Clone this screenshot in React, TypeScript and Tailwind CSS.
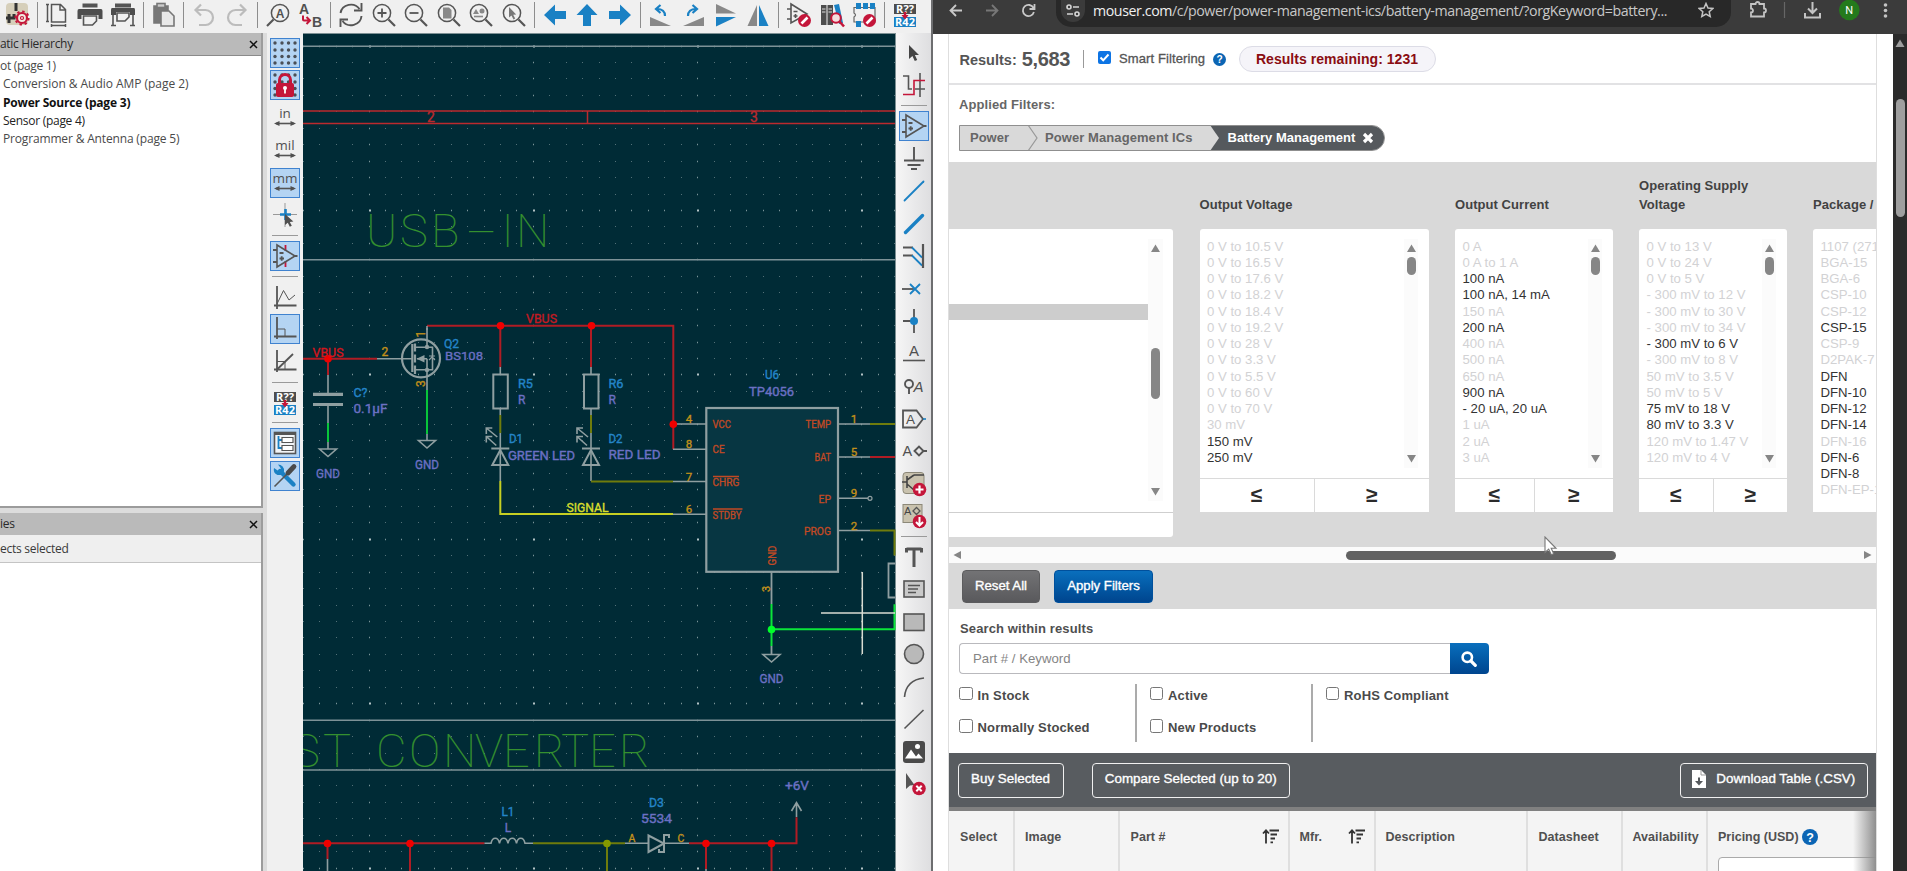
import React from "react";

type IconProps = { children: React.ReactNode };

const Ico = ({ children }: IconProps) => (
  <svg width="24" height="24" viewBox="0 0 24 24" fill="none" stroke="#555" strokeWidth="1.6" className="shrink-0 overflow-visible">
    {children}
  </svg>
);

const BLUE = "#1a81c4";
const RED = "#c4163a";

/* ---------- toolbar drawings ---------- */

const Annotate = () => (
  <Ico>
    <rect x="1" y="1" width="22" height="10" fill="#4d4d4d" stroke="none" />
    <rect x="1" y="14" width="22" height="10" fill={BLUE} stroke="none" />
    <text x="12" y="10" fontSize="11" fontWeight="700" fill="#fff" stroke="none" textAnchor="middle" textLength="18" fontFamily="Open Sans, sans-serif">R??</text>
    <text x="12" y="23.4" fontSize="11" fontWeight="700" fill="#fff" stroke="none" textAnchor="middle" textLength="20" fontFamily="Open Sans, sans-serif">R42</text>
    <path d="M12 9v4" stroke={RED} strokeWidth="2.4" />
    <path d="M8.5 12h7L12 16.500z" fill={RED} stroke="none" />
  </Ico>
);

const OpAmp = ({ red }: { red?: boolean }) => (
  <Ico>
    {red && <path d="M12.500 1v6M12.500 17v6" stroke={RED} strokeWidth="1.8" />}
    <path d="M4 1v22L22 12z" />
    <path d="M0 6h4M0 18h4M22 12h2.500M6.500 9h4M6.500 14.500h4.500M8.700 12.300v4.400" strokeWidth="1.800" />
  </Ico>
);

const Magnifier = ({ children }: { children?: React.ReactNode }) => (
  <Ico>
    <circle cx="10" cy="10" r="8.600" strokeWidth="1.500" />
    <path d="M16.500 16.500L23 23" strokeWidth="2.200" />
    {children}
  </Ico>
);

const Prohibit = () => (
  <g>
    <circle cx="17.500" cy="17.500" r="6.500" fill={RED} stroke="none" />
    <path d="M14.500 20.500l6-6" stroke="#fff" strokeWidth="2.600" />
  </g>
);

const Grid = () => (
  <g fill="#4a4f56" stroke="none">
    {[2, 9, 15.500, 22].map((y) => [2, 9, 15.500, 22].map((x) => <circle key={`${x}-${y}`} cx={x} cy={y} r="1.700" />))}
  </g>
);

const Unit = ({ label }: { label: string }) => (
  <Ico>
    <text x="12" y="11.500" fontSize="13.500" fill="#505050" stroke="none" textAnchor="middle" fontFamily="Open Sans, sans-serif">{label}</text>
    <path d="M3 17.500h18" strokeWidth="1.600" />
    <path d="M1 17.500l5.500-2.600v5.200zM23 17.500l-5.500-2.600v5.200z" fill="#505050" stroke="none" />
  </Ico>
);

const topIcons: (React.ReactNode | "|")[] = [
  <Ico key="g">
    <rect x="1" y="0" width="22" height="22" rx="4" fill="#d6cfba" stroke="none" />
    <path d="M11 0v8M1 15h8v-4M4 11v9" stroke="#333" strokeWidth="3" />
    <circle cx="17" cy="15" r="5" fill="#f2e9e0" stroke={RED} strokeWidth="2.200" />
    <circle cx="17" cy="15" r="6.600" stroke={RED} strokeWidth="2" strokeDasharray="2.400 2.780" />
    <circle cx="17" cy="15" r="1.500" stroke={RED} strokeWidth="1.200" />
  </Ico>,
  "|",
  <Ico key="pg"><path d="M5.500 1.500h9l5 5V19h-14zM14 1.500V7h5.500M1.500 1v18M0 1.500h3M0 18.500h3M5.500 22.500h14M5.500 21v3M19.500 21v3" strokeWidth="1.500" /></Ico>,
  <Ico key="pr">
    <rect x="4.500" y="0.500" width="15" height="4" fill="#555" stroke="none" />
    <path d="M1 6h22q1.500 0 1.500 2v8h-4v-4h-17v4h-4V8q0-2 1.500-2z" fill="#4d4d4d" stroke="none" />
    <path d="M5.500 13h13v5l-4 4h-9z" />
  </Ico>,
  <Ico key="pl">
    <rect x="4" y="0.500" width="16" height="4" fill="#555" stroke="none" />
    <path d="M1 5h22q1 0 1 2v5h-5V9H5v3H0V7q0-2 1-2z" fill="#4d4d4d" stroke="none" />
    <path d="M6 10h12v4l-4 4H6zM2 12v10M22 12v10M0 22.500h5M19 22.500h5" />
  </Ico>,
  "|",
  <Ico key="pa">
    <path d="M3 3h14v17H3z" fill="#777" stroke="#777" />
    <rect x="6" y="0.500" width="8" height="4" fill="#ccc" stroke="#777" />
    <path d="M10 8h8l5 5v10H10z" fill="#e8e8e8" stroke="#777" />
  </Ico>,
  "|",
  <Ico key="un"><path d="M7 22h6.500a7.500 7.500 0 0 0 0-15H4M9 1.500L3.500 7 9 12.500" stroke="#bcbcbc" strokeWidth="2.200" /></Ico>,
  <Ico key="re"><path d="M17 22h-6.500a7.500 7.500 0 0 1 0-15H20M15 1.500L20.500 7 15 12.500" stroke="#bcbcbc" strokeWidth="2.200" /></Ico>,
  "|",
  <Ico key="fi">
    <circle cx="14" cy="10" r="8.600" strokeWidth="1.500" />
    <path d="M7.500 16.500L1 23" strokeWidth="2.200" />
    <text x="14" y="14.500" fontSize="12" fontWeight="700" fill="#505050" stroke="none" textAnchor="middle" fontFamily="Liberation Sans, sans-serif">A</text>
  </Ico>,
  <Ico key="ab">
    <text x="1" y="11" fontSize="14" fontWeight="700" fill="#505050" stroke="none" fontFamily="Liberation Sans, sans-serif">A</text>
    <text x="14" y="23.500" fontSize="14" fontWeight="700" fill="#505050" stroke="none" fontFamily="Liberation Sans, sans-serif">B</text>
    <path d="M5 12.500v4q0 1 1 1h5M8.500 14l3.500 3.500L8.500 21" stroke={RED} strokeWidth="2" />
  </Ico>,
  "|",
  <Ico key="rf"><path d="M1.500 10A10.500 10 0 0 1 20.500 6M22.500 0v7.500H15M22.500 13A10.500 10 0 0 1 3.500 18M1.500 24v-7.500H9" strokeWidth="1.900" /></Ico>,
  <Magnifier key="z+"><path d="M5.500 10h9M10 5.500v9" strokeWidth="1.800" /></Magnifier>,
  <Magnifier key="z-"><path d="M5.500 10h9" strokeWidth="1.800" /></Magnifier>,
  <Magnifier key="zf"><path d="M6 4.500h6l2.500 2.500v8.500H6z" fill="#888" stroke="none" /></Magnifier>,
  <Magnifier key="zo"><path d="M4 11l3-5 3 5z" fill="#888" stroke="none" /><circle cx="13" cy="8" r="2.500" fill="#888" stroke="none" /><path d="M5 13.500h9" stroke="#888" /></Magnifier>,
  <Magnifier key="zs"><path d="M7 4v10.500l2.500-2 2 4 1.700-1-2-3.800 3-.3z" fill="#777" stroke="none" /></Magnifier>,
  "|",
  <Ico key="l"><path d="M1 12L12 1.500V8h11v8H12v6.500z" fill={BLUE} stroke="none" /></Ico>,
  <Ico key="u"><path d="M12 1L1.500 12H8v11h8V12h6.500z" fill={BLUE} stroke="none" /></Ico>,
  <Ico key="r"><path d="M23 12L12 1.500V8H1v8h11v6.500z" fill={BLUE} stroke="none" /></Ico>,
  "|",
  <Ico key="rl"><path d="M1 14v9h21z" fill="#888" stroke="none" /><path d="M16 13q0-7-8-7M11.500 2L7 6l4.500 4" stroke={BLUE} strokeWidth="2.200" /></Ico>,
  <Ico key="rr"><path d="M23 14v9H2z" fill="#888" stroke="none" /><path d="M7 13q0-7 8-7M11.500 2L16 6l-4.500 4" stroke={BLUE} strokeWidth="2.200" /></Ico>,
  <Ico key="fv"><path d="M2 1v9.500h20z" fill="#888" stroke="none" /><path d="M2 23.500V14h20z" fill={BLUE} stroke="none" /></Ico>,
  <Ico key="fh"><path d="M1.500 23H11V2z" fill="#888" stroke="none" /><path d="M22.500 23H13V2z" fill={BLUE} stroke="none" /></Ico>,
  "|",
  <Ico key="ed"><path d="M4 1v19L20 11zM0 6h4M0 16h4M6.500 8.500h4M6.500 13h4M8.500 11v4" /><Prohibit /></Ico>,
  <Ico key="lb">
    <path d="M1 2h5.500v20H1zM7.500 2H13v20H7.500z" fill="#4d4d4d" stroke="none" />
    <path d="M2 6h3.500M8.500 6H12M2 9h3.500M8.500 9H12" stroke="#ddd" strokeWidth="1" />
    <path d="M14 2l5-1 4 19-4 1z" fill={BLUE} stroke="none" />
    <circle cx="16" cy="15" r="4.800" fill="#f4dede" stroke={RED} strokeWidth="2" />
    <path d="M19.500 18.500l4.500 5" stroke={RED} strokeWidth="2.600" />
  </Ico>,
  <Ico key="fp">
    <path d="M2 4.500h21V19H2v-5q3-2 0-4z" stroke="#666" strokeWidth="1.200" />
    <path d="M4 0h5v6H4zM11 0h5v6h-5zM18 0h5v6h-5zM4 18h5v6H4z" fill={BLUE} stroke="none" />
    <Prohibit />
  </Ico>,
  "|",
  <Annotate key="an" />,
];

type SideItem = "|" | { icon: React.ReactNode; on?: boolean };

const leftIcons: SideItem[] = [
  { on: true, icon: <Ico><Grid /></Ico> },
  {
    on: true,
    icon: (
      <Ico>
        <Grid />
        <path d="M6.500 11V7a5.500 5.500 0 0 1 11 0v4" stroke={RED} strokeWidth="3" />
        <rect x="3" y="10" width="18" height="14" rx="2" fill={RED} stroke="none" />
        <circle cx="12" cy="15" r="2" fill="#fff" stroke="none" /><path d="M12 16v4.500" stroke="#fff" strokeWidth="1.800" />
      </Ico>
    ),
  },
  { icon: <Unit label="in" /> },
  { icon: <Unit label="mil" /> },
  { on: true, icon: <Unit label="mm" /> },
  {
    icon: (
      <Ico>
        <path d="M12 0v24M0 11.500h24" stroke="#999" strokeWidth="1" />
        <path d="M12.500 6v11M7 11.500h11" stroke={BLUE} strokeWidth="2.600" />
        <path d="M12 11v11l2.800-2.300 2 4 2-1-2-3.800 3.600-.4z" fill="#505050" stroke="none" />
      </Ico>
    ),
  },
  "|",
  { on: true, icon: <OpAmp red /> },
  "|",
  { icon: <Ico><path d="M4 1v23M1 20.500h22.500" strokeWidth="1.800" /><path d="M4 19l6.500-13.500L16 15l6-5" strokeWidth="1" /></Ico> },
  { on: true, icon: <Ico><path d="M4 0v22M1 19.500h22.500" strokeWidth="1.800" /><path d="M4 12h8v7.500" strokeWidth="1" /></Ico> },
  { icon: <Ico><path d="M4 0v22M1 19.500h22.500" strokeWidth="1.800" /><path d="M4 19.500L20 4" strokeWidth="1.800" /><path d="M4 11.500h8v8" strokeWidth="1" /></Ico> },
  "|",
  { icon: <Annotate /> },
  "|",
  {
    on: true,
    icon: (
      <Ico>
        <rect x="1.500" y="1.500" width="21" height="21" fill="#f2f4f6" /><path d="M1 2.500h22" strokeWidth="3" />
        <path d="M5.500 5v13M5.500 9h4M5.500 17h4" stroke={BLUE} strokeWidth="1.800" />
        <path d="M9 6.500h11v5H9zM9 14.500h11v5H9z" strokeWidth="1.200" fill="#fff" />
      </Ico>
    ),
  },
  {
    on: true,
    icon: (
      <Ico>
        <path d="M7 7l13.500 13.500" stroke={BLUE} strokeWidth="4.400" strokeLinecap="round" />
        <path d="M1 4l4.500 3L8 4.500 5 0.500A6 6 0 0 1 11 7.500 6 6 0 0 1 4.500 11 6 6 0 0 1 1 4z" fill={BLUE} stroke="none" />
        <path d="M1.500 22.500L14 10" strokeWidth="1.600" />
        <path d="M15 9l6-6.500" strokeWidth="4.800" strokeLinecap="round" stroke="#4a4a4a" />
      </Ico>
    ),
  },
];

const rightIcons: SideItem[] = [
  { icon: <Ico><path d="M7 4v14l3.400-3 2.400 5 2.400-1.100-2.300-4.900H17z" fill="#444" stroke="none" /></Ico> },
  { icon: <Ico><path d="M1 3h5.500v13H10M13 16h10M18 0v24" /><path d="M1 21.500h11V7.500h11" stroke={RED} strokeWidth="1.600" /></Ico> },
  "|",
  { on: true, icon: <OpAmp /> },
  { icon: <Ico><path d="M12 0v13.500M2 13.500h20M5.500 18h13M9 22h6" strokeWidth="1.900" /></Ico> },
  { icon: <Ico><path d="M2.500 21.500l19-19" stroke={BLUE} strokeWidth="1.800" strokeLinecap="round" /></Ico> },
  { icon: <Ico><path d="M3.500 20.500l17-17" stroke={BLUE} strokeWidth="3.400" strokeLinecap="round" /></Ico> },
  { icon: <Ico><path d="M1 3.500h10M1 11.500h10" strokeWidth="1.800" /><path d="M10 3.500l10 10M10 11.500l10 10" stroke={BLUE} strokeWidth="1.800" /><path d="M21 0v24" strokeWidth="2.200" /></Ico> },
  { icon: <Ico><path d="M0 12h12" strokeWidth="1.800" /><path d="M8 7l10 10M18 7L8 17" stroke={BLUE} strokeWidth="1.800" /></Ico> },
  { icon: <Ico><path d="M1 12h11M12 0v24" strokeWidth="1.800" /><circle cx="12" cy="12" r="4" fill={BLUE} stroke="none" /></Ico> },
  { icon: <Ico><text x="12" y="14" fontSize="15" fill="#505050" stroke="none" textAnchor="middle" fontFamily="Liberation Sans, sans-serif">A</text><path d="M1 18.500h22" /></Ico> },
  { icon: <Ico><circle cx="7" cy="10" r="4" strokeWidth="1.900" /><path d="M7 14v6" strokeWidth="1.900" /><text x="11.500" y="17.500" fontSize="15" fontStyle="italic" fill="#505050" stroke="none" fontFamily="Liberation Sans, sans-serif">A</text></Ico> },
  { icon: <Ico><path d="M1 3.500h13.500l6.500 8.500-6.500 8.500H1z" strokeWidth="1.800" /><text x="8.500" y="17" fontSize="13.500" fill="#505050" stroke="none" textAnchor="middle" fontFamily="Liberation Sans, sans-serif">A</text><path d="M21 12h3" stroke={BLUE} /></Ico> },
  { icon: <Ico><text x="0.500" y="17" fontSize="14.500" fill="#505050" stroke="none" fontFamily="Liberation Sans, sans-serif">A</text><path d="M12.500 12l4.500-4.500 4.500 4.500-4.500 4.500zM21.500 12H25" strokeWidth="1.900" /></Ico> },
  {
    icon: (
      <Ico>
        <rect x="1" y="0.500" width="21" height="21" rx="3" fill="#c9c2ae" stroke="#8c8878" strokeWidth="1" />
        <path d="M0 10h5M5 4v12M5 8l7-5M5 12l7 6M12 3h10" stroke="#444" />
        <circle cx="17.500" cy="17.500" r="6.800" fill={RED} stroke="none" /><path d="M13.500 17.500h8M17.500 13.500v8" stroke="#fff" strokeWidth="2.200" />
      </Ico>
    ),
  },
  {
    icon: (
      <Ico>
        <rect x="1" y="0.500" width="19" height="18" fill="#c9c2ae" stroke="#8c8878" strokeWidth="1" />
        <text x="2" y="11" fontSize="11" fill="#444" stroke="none" fontFamily="Liberation Sans, sans-serif">A</text>
        <path d="M11 7l3.500-3.500L18 7l-3.500 3.500z" strokeWidth="1.300" />
        <circle cx="17.500" cy="17.500" r="6.800" fill={RED} stroke="none" /><path d="M17.500 13v8M14 18l3.500 3.500L21 18" stroke="#fff" strokeWidth="2" />
      </Ico>
    ),
  },
  "|",
  { icon: <Ico><path d="M4.500 4h15M12 4v18M4.500 3v4.500M19.500 3v4.500" strokeWidth="3" /></Ico> },
  { icon: <Ico><rect x="2" y="4" width="20" height="16" fill="#c9c9c9" strokeWidth="1.600" /><path d="M6 8.500h12M6 12h10M6 15.500h8" strokeWidth="1.400" /></Ico> },
  { icon: <Ico><rect x="2" y="4" width="20" height="16.500" fill="#b9b9b9" /></Ico> },
  { icon: <Ico><circle cx="12" cy="12" r="9.500" fill="#b9b9b9" /></Ico> },
  { icon: <Ico><path d="M2.500 22Q4 5 22 3" /></Ico> },
  { icon: <Ico><path d="M2.500 21.500L21.500 3" /></Ico> },
  { icon: <Ico><rect x="1" y="1" width="22" height="22" rx="3" fill="#4a4a4a" stroke="none" /><path d="M3 18.500l6-9 5 7 2.500-3 4.500 5z" fill="#fff" stroke="none" /><circle cx="15.500" cy="6.500" r="2.500" fill="#fff" stroke="none" /></Ico> },
  { icon: <Ico><path d="M4 1v16l4-3.500 4.500-.5z" fill="#555" stroke="none" /><circle cx="17" cy="16.500" r="6.800" fill={RED} stroke="none" /><path d="M14.300 13.800l5.400 5.400M19.700 13.800l-5.400 5.400" stroke="#fff" strokeWidth="2" /></Ico> },
];

const SideBar = ({ items }: { items: SideItem[] }) => (
  <div className="flex w-[35px] shrink-0 flex-col items-center pt-[3.7px]">
    {items.map((it, i) =>
      it === "|" ? (
        <div key={i} className="flex h-[8.2px] shrink-0 items-center"><div className="h-px w-[26px] bg-[#9a9a9a]" /></div>
      ) : (
        <div key={i} className="flex h-[32.5px] shrink-0 items-center">
          <div className={it.on ? "flex h-[30px] w-[30px] items-center justify-center border border-[#3f82cf] bg-[#b4d4f3]" : "flex h-[30px] w-[30px] items-center justify-center"}>
            {it.icon}
          </div>
        </div>
      )
    )}
  </div>
);

/* ---------- schematic ---------- */

const W = "#8f9fa1";
const WR = "#b01c24";
const GR = "#08c63a";
const OL = "#6f7c0c";
const OR = "#c2901a";
const REFC = "#2485c9";
const VAL = "#6c70c4";
const PIN = "#c24a24";

const dots = (major: 0 | 1 | 2) => {
  let d = "";
  for (let i = -4; i <= 32; i++)
    for (let j = -10; j <= 40; j++) {
      const m = (i % 10 === 0 ? 1 : 0) + (j % 10 === 0 ? 1 : 0);
      if (m !== major) continue;
      d += `M${Math.round(368.500 + i * 16.430)} ${Math.round(210 + j * 16.440) + 0.5}h${major === 2 ? 2 : 1}`;
    }
  return d;
};

type TProps = { x: number; y: number; w?: number; c: string; t: string; a?: "start" | "middle" | "end"; s?: number; rot?: boolean };
const T = ({ x, y, w, c, t, a = "start", s = 12, rot }: TProps) => (
  <text x={x} y={y} fill={c} stroke={c} strokeWidth="0.35" fontSize={s} textLength={w} lengthAdjust="spacingAndGlyphs" textAnchor={a} transform={rot ? `rotate(-90 ${x} ${y})` : undefined}>
    {t}
  </text>
);

const L = ({ d, c = W, w = 1.6 }: { d: string; c?: string; w?: number }) => <path d={d} stroke={c} strokeWidth={w} fill="none" />;
const J = ({ x, y, c = "#f00000" }: { x: number; y: number; c?: string }) => <circle cx={x} cy={y} r="3.8" fill={c} />;

const Gnd = ({ x, y }: { x: number; y: number }) => (
  <g>
    <L d={`M${x - 8.5} ${y}h17l-8.500 7.500z`} />
    <T x={x} y={y + 28.5} w={24} c={VAL} t="GND" a="middle" />
  </g>
);

const Led = ({ x }: { x: number }) => (
  <g>
    <L d={`M${x} 326v41`} c={WR} w={2} />
    <L d={`M${x} 367v7M${x} 408v7M${x} 433v48`} />
    <L d={`M${x} 415v18`} c={OL} w={2} />
    <L d={`M${x - 7} 374.500h14.500v34h-14.500z`} w={2} />
    <L d={`M${x - 9} 448.500h18M${x} 450l-8 15h16z`} w={2} />
    <L d={`M${x - 3} 437l-11-9m0 6v-6h6M${x - 4} 445.500l-10-9m0 6v-6h6`} />
  </g>
);

const Schematic = () => (
  <svg width="593" height="838" viewBox="303 33 593 838" className="block bg-[#002b36]" fontFamily="Roboto, sans-serif">
    <path d={dots(0)} stroke="#537178" strokeWidth="1" />
    <path d={dots(1)} stroke="#7a9499" strokeWidth="1.300" />
    <path d={dots(2)} stroke="#b3c3c5" strokeWidth="2" />
    <L d="M303 33.500h593M895.500 33v838" c="#7d9094" w={1} />
    <L d="M303 46.300h592M303 259.700h592M303 720.300h592M303 770h592" c="#7d9297" w={1.500} />
    <L d="M303 111h592M303 123.600h592M587.500 111v12" c="#bb2a2e" w={1.500} />
    <T x={431} y={122} c="#bb2a2e" t="2" a="middle" s={14} />
    <T x={754} y={122} c="#bb2a2e" t="3" a="middle" s={14} />

    <g fontSize="47" fontWeight="100" fill="#35902f" stroke="#35902f" strokeWidth="0.15">
      <text y="247" x="366 400 431">USB</text>
      <text y="247" x="466" textLength="31" lengthAdjust="spacingAndGlyphs">-</text>
      <text y="247" x="501.500 516">IN</text>
      <text y="767.300" x="292 323 350 376 409 443 475 503 534 561 589 619">ST CONVERTER</text>
    </g>

    <L d="M303 358.700h74M328 358v17" c={WR} w={2} />
    <L d="M377 358.700h36M328 375v18M328 406v17M328 442v7" />
    <L d="M328 423v19" c={GR} w={2} />
    <L d="M313 394.300h30M313 404.500h30" w={3.2} />
    <J x={328} y={358.700} />
    <Gnd x={328} y={449} />
    <T x={312.500} y={356.500} w={31} c="#d4151c" t="VBUS" />
    <T x={353.500} y={396.500} w={14} c={REFC} t="C?" />
    <T x={353.500} y={412.700} w={34} c={VAL} t="0.1µF" />

    <circle cx="421" cy="358.300" r="19" fill="none" stroke={W} strokeWidth="2.200" />
    <L d="M412.300 344v28M415 343.500v8M415 354.500v8M415 365.500v8.500" w={2.200} />
    <L d="M415 347.300h17.500v22.500H415M417 358.700h10M427 328v19M427 358.700v75" />
    <path d="M416.500 358.700l8-3.800v7.600z" fill={W} />
    <circle cx="427" cy="347" r="2.200" fill={W} /><circle cx="427" cy="370" r="2.200" fill={W} />
    <L d="M429 360l3-3 3 3M429 356h6" w={1.200} />
    <L d="M427 390v44" c={GR} w={2} />
    <L d="M427 434v7" />
    <Gnd x={427} y={440.500} />
    <T x={381.500} y={356} c={OR} t="2" />
    <T x={424.500} y={337.500} c={OR} t="1" rot />
    <T x={424.500} y={387} c={OR} t="3" rot />
    <T x={444} y={348} w={15} c={REFC} t="Q2" />
    <T x={445} y={359.500} w={38} c={VAL} t="BS108" s={11.500} />

    <L d="M427 325.700h246.300v123.500" c={WR} w={2} />
    <L d="M427 326v4" />
    <Led x={500.300} />
    <Led x={591} />
    <L d="M500.300 481v33H673" c="#c6cf22" w={2} />
    <L d="M591 481.500h82" c={OL} w={2} />
    <L d="M673 481.500h33M673 514.200h33M673 424h33M673 449.300h33M838 424h32M838 457h32M838 498.300h30M838 530.500h32" />
    <J x={500.500} y={325.700} /><J x={591.500} y={325.700} /><J x={673.300} y={424.300} />
    <T x={526} y={322.500} w={31} c="#c41a22" t="VBUS" />
    <T x={566.500} y={511.500} w={42} c="#d8df2c" t="SIGNAL" />
    <T x={518} y={387.500} w={15} c={REFC} t="R5" /><T x={518} y={404} c={VAL} t="R" />
    <T x={608.500} y={387.500} w={15} c={REFC} t="R6" /><T x={608.500} y={404} c={VAL} t="R" />
    <T x={509} y={443} w={14} c={REFC} t="D1" /><T x={508} y={459.500} w={67} c={VAL} t="GREEN LED" />
    <T x={608.500} y={442.500} w={14} c={REFC} t="D2" /><T x={608.500} y={459} w={52} c={VAL} t="RED LED" />

    <rect x="706.300" y="408" width="131.700" height="163.800" fill="#073642" stroke={W} strokeWidth="2.200" />
    <T x={772} y={379} w={14} c={REFC} t="U6" a="middle" />
    <T x={771.500} y={395.5} w={45} c={VAL} t="TP4056" a="middle" />
    {([["4", 689, 422.500], ["8", 689, 447.500], ["7", 689, 480.500], ["6", 689, 513], ["1", 854, 422.500], ["5", 854, 455.500], ["9", 854, 496.500], ["2", 854, 529.500]] as [string, number, number][]).map(([t, x, y]) => (
      <T key={t} x={x} y={y} c={OR} t={t} a="middle" s={11.5} />
    ))}
    <T x={712.500} y={428} w={18.500} c={PIN} t="VCC" s={11} />
    <T x={712.500} y={453} w={12} c={PIN} t="CE" s={11} />
    <T x={712.500} y={485.500} w={27} c={PIN} t="CHRG" s={11} />
    <T x={712.500} y={518.500} w={29} c={PIN} t="STDBY" s={11} />
    <L d="M713 476.500h26M713 509h29.500" c={PIN} w={1.500} />
    <T x={831} y={428} w={25.500} c={PIN} t="TEMP" a="end" s={11} />
    <T x={831} y={461} w={16.500} c={PIN} t="BAT" a="end" s={11} />
    <T x={831} y={502.500} w={12.500} c={PIN} t="EP" a="end" s={11} />
    <T x={831} y={535} w={27} c={PIN} t="PROG" a="end" s={11} />
    <T x={775.500} y={555.500} w={20} c={PIN} t="GND" a="middle" s={11} rot />
    <L d="M870 424h25M870 530.500h24.500v25" c={OL} w={2} />
    <L d="M870 457h25" c={WR} w={2} />
    <circle cx="870" cy="498.300" r="2" fill="none" stroke={W} strokeWidth="1.200" />

    <L d="M771.500 572v32M771.500 646v8M895 563.500h-6.500v34h6.500" w={1.800} />
    <L d="M771.500 604v42M772 629.200h122.500v-25" c="#0be53a" w={2} />
    <J x={771.500} y={629.500} c="#00ff2a" />
    <Gnd x={771.500} y={654.500} />
    <T x={769.500} y={592} c={OR} t="3" s={11} rot />
    <L d="M821 613h74M862.300 572v82" c="#d9dcd2" w={1.500} />

    <L d="M303 843.300h181.500M327.500 843v16M410 843v28M689 843.300h107.500v-26M706 843v26M771.500 843v28" c={WR} w={2} />
    <L d="M533 843.300h92M607 843v28" c={OL} w={2} />
    <L d="M327.500 859v12M706 869v2M484.500 843.300h6.500q1-5 4.250-5t4.250 5q1-5 4.250-5t4.250 5q1-5 4.250-5t4.250 5q1-5 4.250-5t4.250 5h8M625 843.300h23M665 843.300h24M796.500 817v-14M791.500 811l5-8.500 5 8.500" />
    <L d="M648.500 835.500v16.500l15.500-8.500zM669 838v-3h-5v17h-5v-3" w={2} />
    <J x={327.500} y={843.500} /><J x={410} y={843.500} /><J x={706} y={843.500} /><J x={771.500} y={843.500} />
    <J x={607} y={843.500} c="#859900" />
    <T x={508} y={815.500} w={13} c={REFC} t="L1" a="middle" /><T x={508} y={831.5} c={VAL} t="L" a="middle" />
    <T x={656.500} y={807} w={15} c={REFC} t="D3" a="middle" /><T x={656.500} y={823} w={31} c={VAL} t="5534" a="middle" />
    <T x={632} y={841.500} c={OR} t="A" a="middle" s={10.500} /><T x={681} y={841.500} c={OR} t="C" a="middle" s={10.500} />
    <T x={797} y={790} w={24} c={VAL} t="+6V" a="middle" />
  </svg>
);

/* ---------- left panels ---------- */

const PanelTitle = ({ text, pull }: { text: string; pull: string }) => (
  <div className="flex h-[22px] shrink-0 items-center justify-between overflow-hidden bg-[#bababa] pr-[3px]">
    <span className={`whitespace-nowrap text-[12px] text-[#2a2a2a] ${pull}`}>{text}</span>
    <svg width="9" height="9" viewBox="0 0 9 9"><path d="M1 1l7 7M8 1L1 8" stroke="#111" strokeWidth="1.500" /></svg>
  </div>
);

const Editor = () => (
  <div className="flex w-[933px] shrink-0 flex-col border-r-2 border-[#6d6e70] bg-[#f0f0f0]">
    <div className="flex h-[33px] shrink-0 pl-[0.5px]">
      {topIcons.map((ic, i) =>
        ic === "|" ? (
          <div key={i} className="flex w-[8.2px] shrink-0 justify-center pt-[2px]"><div className="h-[26px] w-px bg-[#8d8d8d]" /></div>
        ) : (
          <div key={i} className="flex w-[32.58px] shrink-0 justify-center pt-[3px]">{ic}</div>
        )
      )}
    </div>
    <div className="flex h-[838px]">
      <div className="flex w-[267px] shrink-0 flex-col bg-[#dcdcdc] font-['Open_Sans',sans-serif]">
        <div className="flex h-[475px] w-[263px] flex-col border-b-2 border-r-2 border-[#9c9c9c] bg-white">
          <PanelTitle text="atic Hierarchy" pull="tracking-[-0.3px]" />
          <div className="flex flex-col border-t border-[#8a8a8a] pt-[1px] text-[12px] leading-[18.300px] text-[#4a4a4a]">
            <span className="tracking-[-0.3px]">ot (page 1)</span>
            <span className="pl-[3px] tracking-[-0.04px]">Conversion &amp; Audio AMP (page 2)</span>
            <span className="pl-[3px] font-bold tracking-[-0.2px] text-[#111]">Power Source (page 3)</span>
            <span className="pl-[3px] tracking-[-0.28px] text-[#222]">Sensor (page 4)</span>
            <span className="pl-[3px] tracking-[-0.16px]">Programmer &amp; Antenna (page 5)</span>
          </div>
        </div>
        <div className="mt-[5px] flex w-[263px] grow flex-col border-r-2 border-[#9c9c9c] bg-white">
          <PanelTitle text="ies" pull="tracking-[-0.2px]" />
          <div className="flex h-[28px] items-center border-b border-[#c4c4c4] bg-[#efefef] text-[12px] tracking-[-0.25px] text-[#3a3a3a]">
            <span>ects selected</span>
          </div>
        </div>
      </div>
      <SideBar items={leftIcons} />
      <div className="ml-px w-[593px] shrink-0 overflow-hidden"><Schematic /></div>
      <div className="flex grow justify-center bg-gradient-to-r from-[#f6f6f6] to-[#dedee0]"><SideBar items={rightIcons} /></div>
    </div>
  </div>
);

/* ---------- browser ---------- */

const Tri = ({ d }: { d: "up" | "down" | "left" | "right" }) => (
  <svg width="9" height="8" viewBox="0 0 9 8" className="shrink-0">
    <path fill="#868686" d={{ up: "M4.5 .5L9 8H0z", down: "M0 0h9L4.500 7.500z", left: "M.5 4L8 0v8z", right: "M8.500 4L1 0v8z" }[d]} />
  </svg>
);

const Help = ({ size }: { size: number }) => (
  <svg width={size} height={size} viewBox="0 0 16 16" className="shrink-0">
    <circle cx="8" cy="8" r="8" fill="#0b65b4" />
    <text x="8" y="12.500" fontSize="12.500" fontWeight="700" fill="#fff" textAnchor="middle" fontFamily="Liberation Sans, sans-serif">?</text>
  </svg>
);

const ListScroll = () => (
  <div className="flex h-[229px] w-[14px] shrink-0 flex-col items-center bg-[#fbfbfb] py-[5px]">
    <Tri d="up" />
    <div className="mt-[5px] h-[18px] w-[9px] rounded-full bg-[#868686]" />
    <div className="grow" />
    <Tri d="down" />
  </div>
);

type Opt = string;
const Options = ({ items }: { items: Opt[] }) => (
  <div className="flex grow flex-col whitespace-nowrap pl-[7.5px] text-[13.2px]">
    {items.map((o) => {
      const on = o.startsWith("*");
      return (
        <div key={o} className={on ? "h-[16.27px] leading-[16.8px] text-[#333]" : "h-[16.27px] leading-[16.8px] text-[#d2d2d4]"}>
          {on ? o.slice(1) : o}
        </div>
      );
    })}
  </div>
);

const Filter = ({ title, width, items, plain }: { title: React.ReactNode; width: string; items: Opt[]; plain?: boolean }) => (
  <div className={`flex shrink-0 flex-col ${width}`}>
    <div className="flex h-[67px] items-end whitespace-nowrap pb-[15px] text-[13px] font-bold leading-[19px] tracking-[0.06px] text-[#424242]"><span>{title}</span></div>
    <div className="flex h-[283px] flex-col rounded-t-[3px] bg-white">
      <div className="flex h-[249px] shrink-0 pr-[11px] pt-[9.5px]">
        <Options items={items} />
        {!plain && <ListScroll />}
      </div>
      {!plain && (
        <div className="flex grow divide-x divide-[#dadada] border-t border-[#dadada] text-[21px] font-bold leading-[32px] text-[#2b2b2b]">
          <div className="flex-1 text-center">≤</div>
          <div className="flex-1 text-center">≥</div>
        </div>
      )}
    </div>
  </div>
);

const voltage = ["0 V to 10.5 V", "0 V to 16.5 V", "0 V to 17.6 V", "0 V to 18.2 V", "0 V to 18.4 V", "0 V to 19.2 V", "0 V to 28 V", "0 V to 3.3 V", "0 V to 5.5 V", "0 V to 60 V", "0 V to 70 V", "30 mV", "*150 mV", "*250 mV"];
const current = ["0 A", "0 A to 1 A", "*100 nA", "*100 nA, 14 mA", "150 nA", "*200 nA", "400 nA", "500 nA", "650 nA", "*900 nA", "*- 20 uA, 20 uA", "1 uA", "2 uA", "3 uA"];
const supply = ["0 V to 13 V", "0 V to 24 V", "0 V to 5 V", "- 300 mV to 12 V", "- 300 mV to 30 V", "- 300 mV to 34 V", "*- 300 mV to 6 V", "- 300 mV to 8 V", "50 mV to 3.5 V", "50 mV to 5 V", "*75 mV to 18 V", "*80 mV to 3.3 V", "120 mV to 1.47 V", "120 mV to 4 V"];
const pack = ["1107 (2716 metric)", "BGA-15", "BGA-6", "CSP-10", "CSP-12", "*CSP-15", "CSP-9", "D2PAK-7", "*DFN", "*DFN-10", "*DFN-12", "*DFN-14", "DFN-16", "*DFN-6", "*DFN-8", "DFN-EP-10"];

const Check = ({ label }: { label: string }) => (
  <div className="flex h-[32.5px] items-start">
    <div className="h-[13.5px] w-[13.5px] rounded-[2.5px] border border-[#767676] bg-white" />
    <span className="ml-[5px] mt-px whitespace-nowrap text-[13px] font-bold leading-[15px] tracking-[0.15px] text-[#4a4a4a]">{label}</span>
  </div>
);

const Sort = () => (
  <svg width="17" height="15" viewBox="0 0 17 15" className="mt-px"><path d="M4 14.500V2M1 4.500L4 1.300 7 4.500M7.500 1.500h9.500M8.500 5.500h6.500M8.500 9.500h4.500M8.500 13.300h2.500" stroke="#333" strokeWidth="1.800" fill="none" /></svg>
);

const Th = ({ w, label, children }: { w: string; label: string; children?: React.ReactNode }) => (
  <div className={`flex shrink-0 items-start border-r-2 border-[#dfdfdf] pt-[17px] ${w}`}>
    <span className="whitespace-nowrap text-[12.5px] font-bold leading-[18px] tracking-[0.05px] text-[#505050]">{label}</span>
    {children}
  </div>
);

const Chrome = () => (
  <div className="flex h-[34px] shrink-0 bg-[#3b3b3b] font-['Open_Sans',sans-serif]">
    <svg width="123" height="34" viewBox="933 0 123 34" fill="none" stroke="#c9c9c9" strokeWidth="1.800">
      <path d="M962 10.500h-11M956 5l-5.500 5.500L956 16" />
      <path d="M986 10.500h11M992 5l5.500 5.500L992 16" stroke="#777" />
      <path d="M1033.500 8a5.600 5.600 0 1 0 .4 4M1034.500 4v5h-5" />
    </svg>
    <div className="flex h-[27px] w-[675px] shrink-0 items-start rounded-b-[15px] bg-[#282828] pl-[5px]">
      <div className="flex h-[22px] w-[24px] shrink-0 justify-center rounded-b-full bg-[#3b3b3b] pt-[4px]">
        <svg width="14" height="13" viewBox="0 0 14 13" fill="none" stroke="#d6d6d6" strokeWidth="1.600"><circle cx="3" cy="3" r="2" /><path d="M7 3h6M1 10h6" /><circle cx="11" cy="10" r="2" /></svg>
      </div>
      <span className="ml-[8px] w-[584px] shrink-0 whitespace-nowrap text-[14.200px] leading-[21px] tracking-[-0.41px] text-[#c8c8c8]">
        <span className="text-[#f0f0f0]">mouser.com</span>/c/power/power-management-ics/battery-management/?orgKeyword=battery...
      </span>
      <svg width="16" height="16" viewBox="0 0 16 16" className="ml-[21px] mt-[2px] shrink-0" fill="none" stroke="#c4c4c4" strokeWidth="1.500"><path d="M8 1.500l2 4.500 4.800.5-3.600 3.200 1 4.800L8 12l-4.200 2.500 1-4.800L1.200 6.500 6 6z" /></svg>
    </div>
    <svg width="176" height="34" viewBox="1731 0 176 34" fill="none" stroke="#c4c4c4" strokeWidth="1.800">
      <path d="M1751 4h4.500a2 2 0 0 1 4 0h4.500v4.500a2 2 0 0 1 0 4V16.500h-13v-4a2 2 0 0 0 0-4z" />
      <path d="M1784.500 2v16" stroke="#666" strokeWidth="1.200" />
      <path d="M1812.500 2v11M1808 8.500l4.500 4.500 4.500-4.500M1805 13v4.500h15V13" strokeWidth="2" />
      <circle cx="1849.300" cy="10" r="10.300" fill="#247a1c" stroke="none" />
      <text x="1849.300" y="14" fontSize="11" fill="#fff" stroke="none" textAnchor="middle" fontFamily="Roboto, sans-serif">N</text>
      <g fill="#c4c4c4" stroke="none"><circle cx="1885.500" cy="5" r="1.800" /><circle cx="1885.500" cy="10.500" r="1.800" /><circle cx="1885.500" cy="16" r="1.800" /></g>
    </svg>
  </div>
);

const Crumbs = () => (
  <div className="mt-[7px] flex h-[26px] w-[425.5px] items-center overflow-hidden rounded-r-full border border-[#8f8f8f] bg-[#d9d9d9] text-[13px] font-bold">
    <span className="w-[68px] shrink-0 pl-[10px] text-[#666]">Power</span>
    <svg width="10" height="26" viewBox="0 0 10 26" className="shrink-0"><path d="M0 0l9 13-9 13" fill="none" stroke="#999" strokeWidth="1.200" /></svg>
    <span className="w-[171.5px] shrink-0 whitespace-nowrap pl-[7px] tracking-[0.08px] text-[#666]">Power Management ICs</span>
    <div className="flex h-full grow items-center bg-[#55595d] text-white">
      <svg width="9" height="26" viewBox="0 0 9 26" className="shrink-0"><path d="M0 0l9 13-9 13z" fill="#d9d9d9" /></svg>
      <span className="whitespace-nowrap pl-[9px]">Battery Management</span>
      <svg width="12" height="12" viewBox="0 0 12 12" className="ml-[7px] shrink-0"><path d="M2 2l8 8M10 2l-8 8" stroke="#fff" strokeWidth="3.200" /></svg>
    </div>
  </div>
);

const outline = "flex h-[35px] items-center justify-center whitespace-nowrap rounded-[4px] border border-[#f0f0f0] pb-[2px] text-[13.4px] text-white [-webkit-text-stroke:0.35px_#fff]";

const Page = () => (
  <div className="ml-[15px] flex w-[929px] flex-col overflow-hidden border-x border-[#dedede] text-[#555]">
    <div className="flex h-[51px] shrink-0 items-center border-b-2 border-[#e2e2e4] pl-[10.5px] pt-px">
      <span className="mt-[4px] text-[14.5px] font-bold">Results:</span>
      <span className="ml-[5px] text-[20px] font-bold tracking-[-0.35px]">5,683</span>
      <div className="ml-[13px] h-[18px] w-px bg-[#999]" />
      <div className="-mt-1 ml-[14px] flex h-[13px] w-[13px] items-center justify-center rounded-[2px] bg-[#0d74e4]">
        <svg width="11" height="11" viewBox="0 0 11 11"><path d="M1.500 5.500L4.200 8.300 9.500 2.500" fill="none" stroke="#fff" strokeWidth="2" /></svg>
      </div>
      <span className="ml-[8px] w-[94px] whitespace-nowrap text-[13px] tracking-[0.1px] [-webkit-text-stroke:0.3px_#555]">Smart Filtering</span>
      <Help size={13} />
      <div className="ml-[12.5px] flex h-[26px] w-[197px] items-center justify-center whitespace-nowrap rounded-full border border-[#dcdce6] bg-[#f5f4f9] text-[14px] font-bold tracking-[0.05px] text-[#8a0d12]">Results remaining: 1231</div>
    </div>
    <div className="flex h-[77px] shrink-0 flex-col pl-[10px] pt-[10px]">
      <span className="h-[23px] text-[13px] font-bold leading-[20px] tracking-[0.1px] text-[#666]">Applied Filters:</span>
      <Crumbs />
    </div>
    <div className="flex h-[385px] shrink-0 gap-[26px] overflow-hidden bg-[#d9d9d9]">
      <div className="mr-px flex w-[223.5px] shrink-0 flex-col pt-[67px]">
        <div className="flex h-[308px] flex-col rounded-r-[3px] bg-white">
          <div className="flex h-[284px] border-b border-[#cfcfcf]">
            <div className="flex grow flex-col pt-[75px]"><div className="h-[16px] bg-[#cdcdcd]" /></div>
            <div className="mr-[10px] mt-[10px] flex h-[262px] w-[15px] flex-col items-center bg-[#fbfbfb] py-[5px]">
              <Tri d="up" />
              <div className="mt-[96px] h-[51px] w-[9px] rounded-full bg-[#868686]" />
              <div className="grow" />
              <Tri d="down" />
            </div>
          </div>
        </div>
      </div>
      <Filter title="Output Voltage" width="w-[229.5px]" items={voltage} />
      <Filter title="Output Current" width="w-[158px]" items={current} />
      <Filter title={<>Operating Supply<br />Voltage</>} width="w-[148px]" items={supply} />
      <Filter title="Package / Case" width="w-[148px]" items={pack} plain />
    </div>
    <div className="relative flex h-[16px] shrink-0 items-center bg-[#fbfbfb] px-[4px]">
      <Tri d="left" />
      <div className="ml-[384px] h-[9px] w-[270px] rounded-full bg-[#626262]" />
      <div className="flex grow justify-end"><Tri d="right" /></div>
      <svg width="14" height="20" viewBox="0 0 14 20" className="absolute -top-[11px] left-[595px]"><path d="M1 1v15.500l3.700-3.300 2.600 5.600 2.400-1.100-2.500-5.400H12z" fill="#fff" stroke="#777" strokeWidth="1.100" /></svg>
    </div>
    <div className="flex h-[46px] shrink-0 gap-[14px] bg-[#d9d9d9] pl-[13px] pt-[7px] text-white">
      <div className="flex h-[33px] w-[78px] items-center justify-center rounded-[4px] border border-[#5c5c5e] bg-gradient-to-b from-[#737375] to-[#59595c] pb-[2px] text-[13.2px] [-webkit-text-stroke:0.35px_#fff]">Reset All</div>
      <div className="flex h-[33px] w-[99px] items-center justify-center rounded-[4px] border border-[#00509c] bg-gradient-to-b from-[#0a6fbd] to-[#00458e] pb-[2px] text-[13.2px] [-webkit-text-stroke:0.35px_#fff]">Apply Filters</div>
    </div>
    <div className="flex h-[144px] shrink-0 flex-col pl-[10px] pt-[10px]">
      <span className="pl-px text-[13px] font-bold leading-[20px] tracking-[0.12px] text-[#4f4f4f]">Search within results</span>
      <div className="mt-[4px] flex h-[31px]">
        <div className="flex w-[491px] items-center rounded-l-[4px] border border-r-0 border-[#b9b9bd] bg-white pl-[13px] pt-px text-[13.2px] text-[#858585]">Part # / Keyword</div>
        <div className="flex w-[38.500px] items-center justify-center rounded-r-[4px] bg-gradient-to-b from-[#0a6fbd] to-[#00458e]">
          <svg width="16" height="16" viewBox="0 0 16 16"><circle cx="6.300" cy="6.300" r="4.700" fill="none" stroke="#fff" strokeWidth="2.600" /><path d="M10 10l4.300 4.300" stroke="#fff" strokeWidth="3.200" strokeLinecap="round" /></svg>
        </div>
      </div>
      <div className="mt-[9.5px] flex h-[58px]">
        <div className="w-[177.500px] border-r-2 border-[#ababab] pt-[3px]"><Check label="In Stock" /><Check label="Normally Stocked" /></div>
        <div className="w-[176px] border-r-2 border-[#ababab] pl-[13px] pt-[3px]"><Check label="Active" /><Check label="New Products" /></div>
        <div className="pl-[13px] pt-[3px]"><Check label="RoHS Compliant" /></div>
      </div>
    </div>
    <div className="flex h-[58px] shrink-0 items-start border-b-4 border-[#808080] bg-[#585c60] pl-[8.500px] pr-[8.500px] pt-[9.500px]">
      <div className={`${outline} w-[106px]`}>Buy Selected</div>
      <div className={`${outline} ml-[28.500px] w-[197.500px]`}>Compare Selected (up to 20)</div>
      <div className={`${outline} ml-auto w-[187.500px]`}>
        <svg width="14" height="18" viewBox="0 0 14 18" className="mr-[10px]"><path d="M0 0h9l5 5v13H0z" fill="#fff" /><path d="M9 0v5h5" fill="none" stroke="#999" /><path d="M7 7.500v5" stroke="#55595d" strokeWidth="2" /><path d="M3 11h8l-4 4.500z" fill="#55595d" /></svg>
        Download Table (.CSV)
      </div>
    </div>
    <div className="relative flex h-[60px] shrink-0 bg-[#f4f4f4]">
      <Th w="w-[66px] pl-[11px]" label="Select" />
      <Th w="w-[104.500px] pl-[10px]" label="Image" />
      <Th w="w-[170px] pl-[11px] pr-[9px] justify-between" label="Part #"><Sort /></Th>
      <Th w="w-[86px] pl-[10px] pr-[9px] justify-between" label="Mfr."><Sort /></Th>
      <Th w="w-[152px] pl-[10px]" label="Description" />
      <Th w="w-[95px] pl-[11px]" label="Datasheet" />
      <Th w="w-[85px] pl-[10px]" label="Availability" />
      <div className="flex grow flex-col pl-[10.5px] pt-[17px]">
        <div className="flex items-center gap-[3px]">
          <span className="whitespace-nowrap text-[12.500px] font-bold leading-[18px] text-[#505050]">Pricing (USD)</span>
          <Help size={16} />
        </div>
        <div className="mt-[11px] h-[30px] w-[200px] rounded-[4px] border border-[#aaa] bg-white pl-[12px] pt-[8px] text-[13px] font-bold text-[#555]">Price by Qty</div>
      </div>
      <div className="absolute right-0 top-0 h-[60px] w-[23px] bg-gradient-to-r from-transparent to-[#8f8f8f]" />
    </div>
  </div>
);

export default function App() {
  return (
    <div className="flex h-[871px] w-[1907px] overflow-hidden bg-white font-['Liberation_Sans',Arial,sans-serif]">
      <Editor />
      <div className="flex w-[974px] shrink-0 flex-col">
        <Chrome />
        <div className="flex h-[837px] bg-white">
          <Page />
          <div className="ml-auto flex w-[14px] flex-col items-center bg-[#2b2b2b] pt-[5px]">
            <svg width="10" height="8" viewBox="0 0 9 8"><path d="M4.500 0.500L9 8H0z" fill="#9f9f9f" /></svg>
            <div className="mt-[52px] h-[118px] w-[9px] rounded-full bg-[#9f9f9f]" />
          </div>
        </div>
      </div>
    </div>
  );
}
